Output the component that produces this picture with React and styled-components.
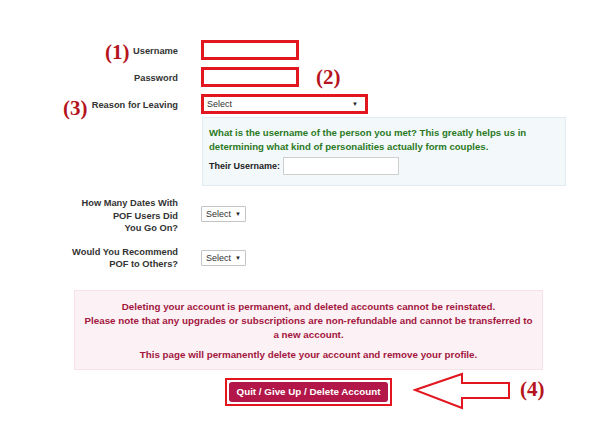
import React from 'react';
import styled, { createGlobalStyle } from 'styled-components';

const GlobalStyle = createGlobalStyle`
  html, body { margin: 0; padding: 0; background: #fff; }
  body { font-family: "Liberation Sans", Arial, sans-serif; }
`;

const Page = styled.div`
  position: relative;
  width: 602px;
  height: 438px;
  padding-top: 40px;
  box-sizing: border-box;
  overflow: hidden;
  background: #fff;
`;

const Row = styled.div`
  display: grid;
  grid-template-columns: 178px 1fr;
  column-gap: 23px;
  align-items: center;
  margin-top: ${p => p.$gap || 0}px;
`;

const Label = styled.div`
  text-align: right;
  font-size: 9.3px;
  font-weight: bold;
  color: #333;
  line-height: 12.5px;
  padding-top: ${p => p.$nudge || 0}px;
`;

const Control = styled.div`
  margin-bottom: ${p => p.$lift || 0}px;
`;

const MarkedInput = styled.input`
  box-sizing: border-box;
  width: 98px;
  height: 20px;
  border: 3px solid #e2161e;
  background: #fff;
  padding: 0 4px;
  outline: none;
`;

const MarkedSelect = styled.div`
  box-sizing: border-box;
  width: 167px;
  height: 20px;
  border: 3px solid #e2161e;
  background: #fff;
  display: flex;
  align-items: center;
  justify-content: space-between;
  padding: 0 7px 0 3px;
  font-size: 9px;
  color: #333;
`;

const SmallSelect = styled.div`
  box-sizing: border-box;
  width: 45px;
  height: 16px;
  border: 1px solid #c4c4c4;
  border-radius: 1px;
  background: #fff;
  display: flex;
  align-items: center;
  justify-content: space-between;
  padding: 0 4px 0 4px;
  font-size: 9px;
  color: #333;
`;

const Caret = styled.span`
  font-size: 6px;
  color: #222;
  line-height: 1;
`;

const Panel = styled.div`
  box-sizing: border-box;
  width: 364px;
  margin-left: 1px;
  background: #f3f8fb;
  border: 1px solid #e1ebf1;
  padding: 8px 6px 10px 6px;
`;

const HelpText = styled.div`
  font-size: 9.6px;
  font-weight: bold;
  color: #2b7a1f;
  line-height: 14px;
`;

const InlineField = styled.div`
  display: flex;
  align-items: center;
  gap: 3px;
  margin-top: 3px;
`;

const SmallLabel = styled.span`
  font-size: 9px;
  font-weight: bold;
  color: #222;
`;

const PlainInput = styled.input`
  box-sizing: border-box;
  width: 116px;
  height: 18px;
  border: 1px solid #cfcfcf;
  background: #fff;
  outline: none;
`;

const Notice = styled.div`
  box-sizing: border-box;
  width: 469px;
  margin: 19px 0 0 74px;
  background: #fcf1f4;
  border: 1px solid #f6e2e8;
  padding: 9px 8px 7px;
  text-align: center;
  color: #a3173f;
  font-size: 9.8px;
  font-weight: bold;
  line-height: 14px;
`;

const NoticePara = styled.p`
  margin: ${p => (p.$first ? 0 : 6)}px 0 0;
`;

const ButtonBar = styled.div`
  width: 469px;
  margin: 8px 0 0 74px;
  display: flex;
  justify-content: center;
`;

const Highlight = styled.div`
  border: 2px solid #e2161e;
  padding: 2px;
  display: flex;
`;

const DangerButton = styled.button`
  height: 20px;
  padding: 0 8px;
  border: none;
  border-radius: 3px;
  background: #b3174a;
  color: #fff;
  font-family: "Liberation Sans", Arial, sans-serif;
  font-size: 9.8px;
  font-weight: bold;
  cursor: pointer;
`;

const Marker = styled.span`
  position: absolute;
  left: ${p => p.$x}px;
  top: ${p => p.$y}px;
  font-family: "Liberation Serif", "Times New Roman", serif;
  font-weight: bold;
  font-size: 21px;
  line-height: 21px;
  color: #b5141c;
`;

const Arrow = styled.svg`
  position: absolute;
  left: 413px;
  top: 372px;
`;

export default function App() {
  return (
    <>
      <GlobalStyle />
      <Page>
        <Row>
          <Label $nudge={3}>Username</Label>
          <Control><MarkedInput type="text" /></Control>
        </Row>
        <Row $gap={7}>
          <Label $nudge={2}>Password</Label>
          <Control><MarkedInput type="password" /></Control>
        </Row>
        <Row $gap={7}>
          <Label $nudge={2}>Reason for Leaving</Label>
          <Control>
            <MarkedSelect>
              <span>Select</span>
              <Caret>▼</Caret>
            </MarkedSelect>
          </Control>
        </Row>
        <Row $gap={3}>
          <div />
          <Panel>
            <HelpText>
              What is the username of the person you met? This greatly helps us in
              determining what kind of personalities actually form couples.
            </HelpText>
            <InlineField>
              <SmallLabel>Their Username:</SmallLabel>
              <PlainInput type="text" />
            </InlineField>
          </Panel>
        </Row>
        <Row $gap={11}>
          <Label>How Many Dates With<br />POF Users Did<br />You Go On?</Label>
          <Control $lift={4}>
            <SmallSelect>
              <span>Select</span>
              <Caret>▼</Caret>
            </SmallSelect>
          </Control>
        </Row>
        <Row $gap={11}>
          <Label>Would You Recommend<br />POF to Others?</Label>
          <Control $lift={1}>
            <SmallSelect>
              <span>Select</span>
              <Caret>▼</Caret>
            </SmallSelect>
          </Control>
        </Row>
        <Notice>
          <NoticePara $first>
            Deleting your account is permanent, and deleted accounts cannot be reinstated.
            <br />
            Please note that any upgrades or subscriptions are non-refundable and cannot be transferred to a new account.
          </NoticePara>
          <NoticePara>This page will permanently delete your account and remove your profile.</NoticePara>
        </Notice>
        <ButtonBar>
          <Highlight>
            <DangerButton type="button">Quit / Give Up / Delete Account</DangerButton>
          </Highlight>
        </ButtonBar>

        <Marker $x={105} $y={42}>(1)</Marker>
        <Marker $x={316} $y={67}>(2)</Marker>
        <Marker $x={63} $y={98}>(3)</Marker>
        <Arrow width="100" height="40" viewBox="0 0 100 40">
          <polygon
            points="2,18 49,2 49,11 96,11 96,26 49,26 49,36"
            fill="#fff"
            stroke="#e2161e"
            strokeWidth="2"
            strokeLinejoin="miter"
          />
        </Arrow>
        <Marker $x={520} $y={379}>(4)</Marker>
      </Page>
    </>
  );
}
